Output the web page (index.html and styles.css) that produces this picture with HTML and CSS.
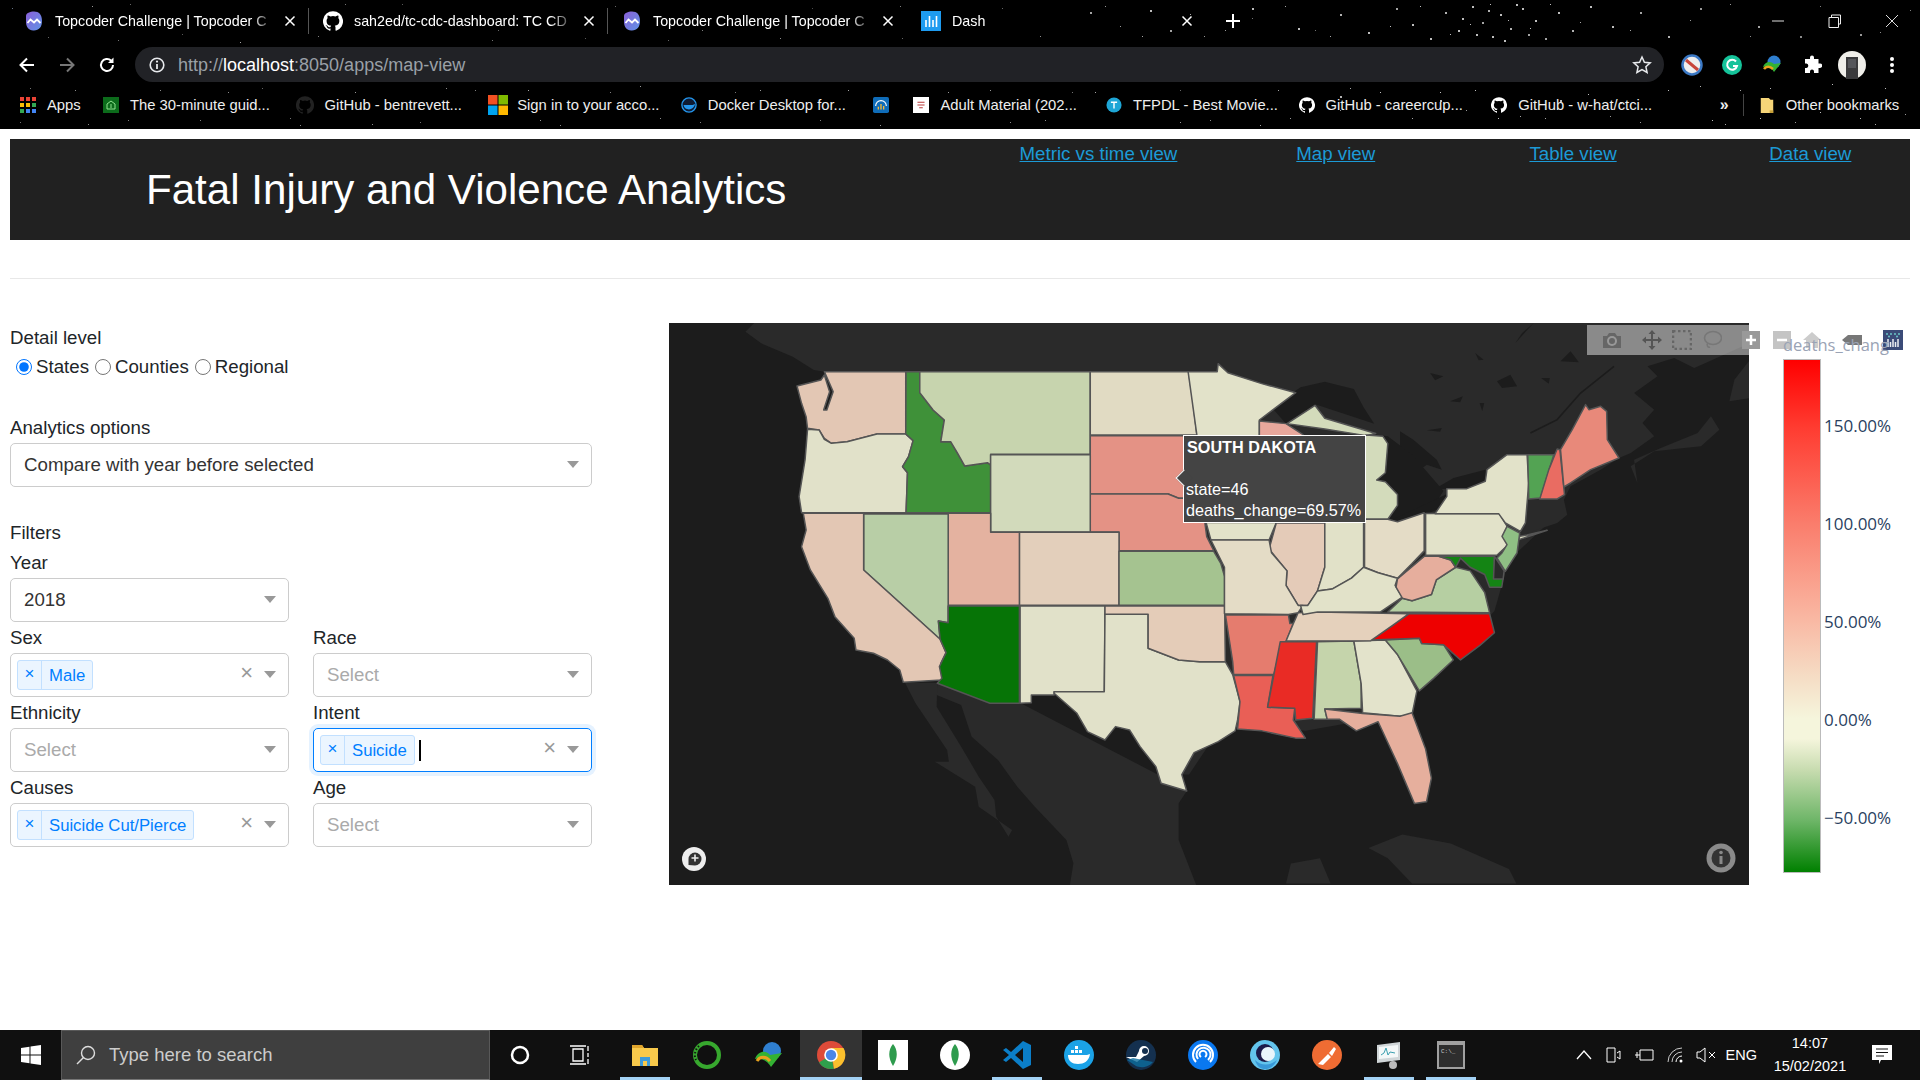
FILE: index.html
```html
<!DOCTYPE html>
<html lang="en">
<head>
<meta charset="utf-8">
<title>Dash</title>
<link rel="stylesheet" href="styles.css">
</head>
<body>
<svg class="defs" width="0" height="0" aria-hidden="true">
  <defs><linearGradient id="tcg" x1="0" y1="0" x2="1" y2="1"><stop offset="0" stop-color="#8a5fd8"/><stop offset="1" stop-color="#5f93e6"/></linearGradient></defs>
  <symbol id="gh" viewBox="0 0 24 24"><path fill="currentColor" d="M12 .3a12 12 0 0 0-3.8 23.4c.6.1.8-.3.8-.6v-2c-3.3.7-4-1.6-4-1.6-.6-1.4-1.4-1.8-1.4-1.8-1-.7.1-.7.1-.7 1.2 0 1.9 1.2 1.9 1.2 1 1.8 2.8 1.3 3.5 1 0-.8.4-1.3.7-1.6-2.7-.3-5.5-1.3-5.5-6 0-1.2.5-2.3 1.3-3.1-.2-.4-.6-1.6 0-3.2 0 0 1-.3 3.4 1.2a11.5 11.5 0 0 1 6 0c2.3-1.5 3.3-1.2 3.3-1.2.6 1.600.2 2.8 0 3.2.9.8 1.3 1.9 1.3 3.2 0 4.6-2.8 5.6-5.5 5.9.5.4.9 1 .9 2.2v3.3c0 .3.1.7.8.6A12 12 0 0 0 12 .3"/></symbol>
  <symbol id="tc" viewBox="0 0 20 20"><path fill="url(#tcg)" d="M2 5c0-3 4-4.500 8-4.500 5 0 8 3 8 9.500 0 6-3 9.500-8 9.500C5 20 2 16 2 11z"/><path d="M3.500 12l3-3.500 3.500 3 3-3 3.500 3.500" fill="none" stroke="#fff" stroke-width="1.800"/></symbol>
  <symbol id="dash" viewBox="0 0 20 20"><rect width="20" height="20" fill="#1e9bf0"/><path d="M5 16V9M8.500 16V5M12 16V9M15.500 16V5" stroke="#fff" stroke-width="1.600"/></symbol>
  <symbol id="x" viewBox="0 0 12 12"><path d="M1.500 1.500l9 9M10.500 1.500l-9 9" stroke="#fff" stroke-width="1.500" fill="none"/></symbol>
</svg>

<header class="chrome">
  <span class="stars"></span>
  <span class="stars dense"></span>
  <div class="tabstrip">
    <div class="tab sep"><svg class="fav"><use href="#tc"/></svg><span class="tab-title">Topcoder Challenge | Topcoder C</span><svg class="tab-x"><use href="#x"/></svg></div>
    <div class="tab sep"><svg class="fav gh"><use href="#gh"/></svg><span class="tab-title">sah2ed/tc-cdc-dashboard: TC CD</span><svg class="tab-x"><use href="#x"/></svg></div>
    <div class="tab"><svg class="fav"><use href="#tc"/></svg><span class="tab-title">Topcoder Challenge | Topcoder C</span><svg class="tab-x"><use href="#x"/></svg></div>
    <div class="tab"><svg class="fav"><use href="#dash"/></svg><span class="tab-title">Dash</span><svg class="tab-x"><use href="#x"/></svg></div>
    <svg class="new-tab" viewBox="0 0 16 16"><path d="M8 1v14M1 8h14" stroke="#fff" stroke-width="2"/></svg>
    <div class="win">
      <span class="win-btn"><svg viewBox="0 0 14 14" width="14" height="14"><path d="M1 7h12" stroke="#ddd"/></svg></span>
      <span class="win-btn"><svg viewBox="0 0 14 14" width="14" height="14"><path d="M3.500 3.500V1h9v9h-2.500M1 3.500h9.500v10H1z" fill="none" stroke="#eee"/></svg></span>
      <span class="win-btn"><svg viewBox="0 0 14 14" width="14" height="14"><path d="M1 1l12 12M13 1L1 13" stroke="#ddd"/></svg></span>
    </div>
  </div>
  <div class="toolbar">
    <span class="nav"><svg viewBox="0 0 18 18" width="18" height="18"><path d="M16 9H3M9 2.500 2.500 9 9 15.500" fill="none" stroke="#fff" stroke-width="2"/></svg></span>
    <span class="nav"><svg viewBox="0 0 18 18" width="18" height="18"><path d="M2 9h13M9 2.500 15.500 9 9 15.500" fill="none" stroke="#777" stroke-width="2"/></svg></span>
    <span class="nav"><svg viewBox="0 0 18 18" width="18" height="18"><path d="M15 9a6 6 0 1 1-1.800-4.300" fill="none" stroke="#fff" stroke-width="2"/><path d="M15.500 1.500v5.500H10z" fill="#fff"/></svg></span>
    <div class="omnibox">
      <svg viewBox="0 0 18 18" width="18" height="18"><circle cx="9" cy="9" r="6.800" fill="none" stroke="#e8eaed" stroke-width="1.600"/><path d="M9 8v5" stroke="#e8eaed" stroke-width="1.800"/><circle cx="9" cy="5.600" r="1.100" fill="#e8eaed"/></svg>
      <span class="url">http://<b>localhost</b>:8050/apps/map-view</span>
      <svg class="star" viewBox="0 0 20 20" width="20" height="20"><path d="M10 2l2.400 5.300 5.800.600-4.300 3.900 1.200 5.700L10 14.600 4.900 17.500l1.200-5.700L1.800 7.900l5.800-.6z" fill="none" stroke="#e8eaed" stroke-width="1.500"/></svg>
    </div>
    <span class="ext"><svg viewBox="0 0 22 22" width="22" height="22"><circle cx="11" cy="11" r="9.500" fill="#eee" stroke="#3b78c4" stroke-width="2.500"/><path d="M5 6l12 10" stroke="#c8453a" stroke-width="3"/></svg></span>
    <span class="ext"><svg viewBox="0 0 22 22" width="22" height="22"><circle cx="11" cy="11" r="10" fill="#15c39a"/><path d="M15 7.500a5 5 0 1 0 1 4.500h-4" fill="none" stroke="#fff" stroke-width="2"/></svg></span>
    <span class="ext"><svg viewBox="0 0 22 22" width="22" height="22"><circle cx="13" cy="8" r="6.500" fill="#2f7fd0"/><path d="M2 13c2-6 8-6 11-3l7-1-7 9c-2-4-6-6-11-5z" fill="#34b233"/><path d="M3 15c2-3 6-3 9 0" fill="none" stroke="#e8a31e" stroke-width="2.500"/></svg></span>
    <span class="ext"><svg viewBox="0 0 20 20" width="20" height="20"><path fill="#fff" d="M8 2.500a2 2 0 0 1 4 0V4h4.500v4.500H18a2.200 2.200 0 0 1 0 4.400h-1.500V18H12v-1.500a2 2 0 0 0-4 0V18H3v-5h1.500a2.300 2.300 0 0 0 0-4.500H3V4h5z"/></svg></span>
    <span class="ext"><svg viewBox="0 0 28 28" width="28" height="28"><circle cx="14" cy="14" r="14" fill="#efeee9"/><path d="M8 28V6h12v22z" fill="#3a3a3c"/><path d="M10 8h8v9h-8z" fill="#55565a"/></svg></span>
    <span class="ext"><svg viewBox="0 0 6 18" width="6" height="18"><circle cx="3" cy="3" r="2" fill="#fff"/><circle cx="3" cy="9" r="2" fill="#fff"/><circle cx="3" cy="15" r="2" fill="#fff"/></svg></span>
  </div>
  <div class="bookmarks">
    <div class="bm bm-apps"><svg class="bm-i" viewBox="0 0 16 16"><g fill="#ea4335"><rect x="0" y="0" width="4" height="4"/><rect x="6" y="0" width="4" height="4"/><rect x="12" y="0" width="4" height="4"/></g><g fill="#fbbc05"><rect x="0" y="6" width="4" height="4"/><rect x="6" y="6" width="4" height="4"/></g><g fill="#34a853"><rect x="12" y="6" width="4" height="4"/><rect x="0" y="12" width="4" height="4"/></g><g fill="#4285f4"><rect x="6" y="12" width="4" height="4"/><rect x="12" y="12" width="4" height="4"/></g></svg>Apps</div>
    <div class="bm"><svg class="bm-i" viewBox="0 0 16 16"><rect width="20" height="16" fill="#0c6b1b"/><path d="M4 12V7l4-3 4 3v5z" fill="none" stroke="#8fe28f"/><path d="M8 7v4" stroke="#8fe28f"/></svg>The 30-minute guid...</div>
    <div class="bm"><svg class="bm-i gh-dark"><use href="#gh"/></svg>GitHub - bentrevett...</div>
    <div class="bm"><svg class="bm-i ms" viewBox="0 0 20 20"><rect width="9.500" height="9.500" fill="#f25022"/><rect x="10.500" width="9.500" height="9.500" fill="#7fba00"/><rect y="10.500" width="9.500" height="9.500" fill="#00a4ef"/><rect x="10.500" y="10.500" width="9.500" height="9.500" fill="#ffb900"/></svg>Sign in to your acco...</div>
    <div class="bm"><svg class="bm-i" viewBox="0 0 18 18"><circle cx="9" cy="9" r="8" fill="#0f1b33" stroke="#2496ed" stroke-width="1.500"/><path d="M3 9h10c1 0 2-1 3-1-1 4-4 6-7 6-3 0-6-2-6-5z" fill="#2496ed"/></svg>Docker Desktop for...</div>
    <div class="bm bm-s"><svg class="bm-i" viewBox="0 0 18 18"><rect width="18" height="18" rx="2" fill="#0f6cb8"/><path d="M3 10a6 6 0 0 1 12 0" fill="none" stroke="#fff" stroke-width="1.300"/><path d="M6 14v-3M9 14V8M12 14v-4" stroke="#f5b93a" stroke-width="1.500"/></svg></div>
    <div class="bm"><svg class="bm-i" viewBox="0 0 18 18"><rect width="18" height="18" fill="#fff"/><path d="M5 6h8M5 9h8M7 12h4" stroke="#b93a3a" stroke-width="1.200"/></svg>Adult Material (202...</div>
    <div class="bm"><svg class="bm-i" viewBox="0 0 18 18"><circle cx="9" cy="9" r="8.500" fill="#1ea6d6"/><path d="M5.500 6h7M9 6v7" stroke="#fff" stroke-width="1.600"/></svg>TFPDL - Best Movie...</div>
    <div class="bm"><svg class="bm-i gh"><use href="#gh"/></svg>GitHub - careercup...</div>
    <div class="bm"><svg class="bm-i gh"><use href="#gh"/></svg>GitHub - w-hat/ctci...</div>
    <span class="bm-more">»</span>
    <span class="bm-sep"></span>
    <div class="bm bm-other"><svg class="bm-i" viewBox="0 0 16 18"><path d="M1 1h9l2 2v0h3v15H1z" fill="#f6d578"/><path d="M11 15h4v3h-4z" fill="#c8a13a"/></svg>Other bookmarks</div>
  </div>
</header>

<main class="page">
  <section class="hero">
    <h1 class="hero-title">Fatal Injury and Violence Analytics</h1>
    <nav class="hero-nav">
      <a class="hero-link" href="#">Metric vs time view</a>
      <a class="hero-link" href="#">Map view</a>
      <a class="hero-link" href="#">Table view</a>
      <a class="hero-link" href="#">Data view</a>
    </nav>
  </section>
  <hr class="rule">
  <div class="content">
    <aside class="controls">
      <div class="label label-first">Detail level</div>
      <div class="radios">
        <label class="radio"><input type="radio" name="lvl" checked>States</label>
        <label class="radio"><input type="radio" name="lvl">Counties</label>
        <label class="radio"><input type="radio" name="lvl">Regional</label>
      </div>
      <div class="label label-gap1">Analytics options</div>
      <div class="select"><span class="value">Compare with year before selected</span><i class="arrow"></i></div>
      <div class="label label-gap2">Filters</div>
      <div class="filters">
        <div><div class="label">Year</div><div class="select"><span class="value">2018</span><i class="arrow"></i></div></div>
        <div></div>
        <div><div class="label">Sex</div><div class="select multi"><span class="tag"><span class="tag-x">×</span><span class="tag-l">Male</span></span><span class="clear">×</span><i class="arrow"></i></div></div>
        <div><div class="label">Race</div><div class="select"><span class="ph">Select</span><i class="arrow"></i></div></div>
        <div><div class="label">Ethnicity</div><div class="select"><span class="ph">Select</span><i class="arrow"></i></div></div>
        <div><div class="label">Intent</div><div class="select multi focus"><span class="tag"><span class="tag-x">×</span><span class="tag-l">Suicide</span></span><span class="caret"></span><span class="clear">×</span><i class="arrow"></i></div></div>
        <div><div class="label">Causes</div><div class="select multi"><span class="tag"><span class="tag-x">×</span><span class="tag-l">Suicide Cut/Pierce</span></span><span class="clear">×</span><i class="arrow"></i></div></div>
        <div><div class="label">Age</div><div class="select"><span class="ph">Select</span><i class="arrow"></i></div></div>
      </div>
    </aside>

    <div class="plot">
      <svg class="map" viewBox="669 323 1080 562" width="1080" height="562">
        <rect x="669" y="323" width="1080" height="562" fill="#1c1c1c"/>
        <!-- land -->
        <g class="land" transform="translate(670 320) scale(.3508 .3333)">
          <path d="M240 9H1568V1000H700L600 800 500 580V300L440 155 410 150 350 110 260 70 215 35Z"/>
        </g>
        <g class="land" transform="translate(670 590) scale(.3508 .3333)">
          <path d="M762 280 912 340H1000L1475 600 1450 640 1450 750 1500 885H1140L1150 820 1130 750 1040 650 990 590 935 510 860 440 830 345 760 315Z"/>
          <path d="M670 278H762L760 350 830 470 880 560 925 630 930 680 965 740 975 720 880 650 870 590 755 515 795 515 790 480 700 340Z"/>
        </g>
        <g class="land" transform="translate(1160 320) scale(.4847 .3636)">
          <path d="M-5 0H800V560L720 660 690 800 620 900 530 1000 510 1080 300 1130 160 1110 100 1170 60 1250H-5Z"/>
          <path d="M260 1550 270 1495 330 1480 352 1550Z"/>
          <path d="M430 1452 500 1415 600 1440 720 1510 735 1550H520L470 1480Z"/>
        </g>
        <g class="land" transform="translate(1400 323) scale(.3344 .3333)">
          <path d="M0 0H1047V60L880 135 820 105 740 130 770 160 700 210 760 260 725 300 760 340 690 390 655 405 600 440 510 490 490 530 500 575 470 600 380 630 360 630 330 720H0Z"/>
          <path d="M690 430 760 385 900 370 955 320 930 280 890 330 780 375 700 410 710 480Z"/>
          <path d="M985 235 1047 225V110L1000 170Z"/>
        </g>
        <!-- lakes -->
        <g class="lake" transform="translate(1400 323) scale(.3344 .3333)">
          <path d="M90 150 130 160 105 172ZM290 175 330 155 350 190 305 195ZM422 165 448 165 445 182ZM480 115 510 85 535 118ZM345 60 400 0 365 30ZM238 240 252 240 246 265ZM80 322 125 315 120 326ZM225 90 250 110 235 112ZM150 235 188 220 180 238Z"/>
          <path class="river" d="M390 330 470 290 540 210 640 130"/>
          <path d="M100 500 160 465 255 440 260 475 200 497 140 497Z"/>
          <path d="M0 600 30 550 140 518 110 560 75 575Z"/>
          <path d="M0 325 40 350 110 410 125 440 80 425 20 470 0 470Z"/>
        </g>
        <g class="lake" transform="translate(1160 320) scale(.4847 .3636)">
          <path d="M230 240 290 185 340 170 400 190 420 240 442 285 320 232 260 285Z"/>
          <path d="M425 312 470 320 520 370 585 470 575 490 470 560 490 490 445 440 462 340Z"/>
          <path d="M470 555 590 480 600 505 490 552Z"/>
        </g>
        <!-- western states -->
        <g class="states" transform="translate(670 320) scale(.3508 .3333)">
          <path fill="#e3c7b4" d="M362 198 430 180 440 165 455 215 438 270 447 270 465 215 440 155H672V342H590L505 365 460 370 440 355 425 330 392 325 388 290 375 250Z"/>
          <path fill="#e1e1c9" d="M392 328 425 330 440 358 460 370 505 365 590 342H672L693 362 680 410 663 440 677 458 673 578H375L368 530 385 420Z"/>
          <path fill="#3f9139" d="M673 155H712V218L750 270 782 300 772 365 800 365 820 400 840 438 905 428 914 435V578H673L677 458 663 440 680 410 693 362 672 342Z"/>
          <path fill="#c7d4ae" d="M712 155H1198V403H914V435L905 428 840 438 820 400 800 365H772L782 300 750 270 712 218Z"/>
          <path fill="#e1dbc3" d="M1198 155H1478L1490 240 1502 345H1198Z"/>
          <path fill="#e49285" d="M1198 347H1505L1530 400 1530 480 1525 535 1450 535 1420 522H1198Z"/>
          <path fill="#e49285" d="M1198 522H1420L1450 535 1525 535 1525 610 1530 650 1550 692H1280V636H1198Z"/>
          <path fill="#d2dabb" d="M914 404H1198V636H914Z"/>
          <path fill="#e3cfbb" d="M996 637H1280V856H996Z"/>
          <path fill="#e4b2a0" d="M793 580H914V637H996V856H793Z"/>
          <path fill="#b8cea6" d="M552 582H793V908L765 903 770 958 552 750Z"/>
          <path fill="#e3c7b4" d="M380 580H552V750L770 958 787 998 772 1030 775 1080 665 1087 655 1050 620 1020 580 1000 530 990 525 955 470 890 450 835 400 750 375 680 388 630Z"/>
          <path fill="#067406" d="M793 858H996V1150H912L762 1090 775 1075 768 1040 787 998 770 958 765 903 793 908Z"/>
          <path fill="#e1e1c9" d="M998 858H1240L1238 1115H1095V1125H1030V1148L998 1150Z"/>
          <path fill="#e1e1c9" d="M1240 883H1363V985L1400 1000 1450 1020 1510 1025 1583 1025 1604 1064 1625 1145 1618 1200 1611 1233 1563 1265 1494 1298 1459 1364 1473 1413 1400 1390 1385 1340 1340 1280 1310 1230 1270 1220 1240 1260 1190 1235 1160 1180 1095 1120V1115H1238Z"/>
          <path fill="#e4ccb8" d="M1240 858H1581L1583 1025H1510L1450 1020 1400 1000 1363 985V883H1240Z"/>
          <path fill="#a5c390" d="M1280 694H1550L1570 730 1581 770V856H1280Z"/>
        </g>
        <!-- eastern states -->
        <g class="states" transform="translate(1160 320) scale(.4847 .3636)">
          <path fill="#e2e2c9" d="M58 142H118L120 120 140 145 210 175 280 200 205 275V320L215 480 240 557H95L76 316Z"/>
          <path fill="#e8a89c" d="M205 278 260 285 295 315V540H240L215 480 205 320Z"/>
          <path fill="#d3dbbb" d="M262 285 320 235 340 270 445 312 425 318 340 300Z"/>
          <path fill="#d3dbbb" d="M340 420 425 316 460 320 470 340 465 420 447 440 465 445 490 480 490 510 470 548H340Z"/>
          <path fill="#e2e2c9" d="M95 557H240L225 605H105Z"/>
          <path fill="#e4cbb8" d="M240 558H340V680L325 745 305 785H285L260 730 262 690 225 630Z"/>
          <path fill="#e1e1c8" d="M340 553H420V680L395 710 355 740 325 745 340 680Z"/>
          <path fill="#e4dcc6" d="M422 548H470L490 555 545 530V635L520 670 490 710 450 695 422 680Z"/>
          <path fill="#e4dcc6" d="M105 605H225L230 640 262 690 260 730 285 785H295L285 805 265 810 133 808V680Z"/>
          <path fill="#e57c6e" d="M135 811H265L268 835H275L260 885 248 905 235 975H152L150 940Z"/>
          <path fill="#e95f56" d="M152 978H233L222 1065 278 1068 275 1100 300 1150 280 1150 210 1130 160 1125 165 1050Z"/>
          <path fill="#e92b25" d="M248 885H323L315 1095 280 1100 278 1068 222 1065 235 975Z"/>
          <path fill="#c5d4ab" d="M325 885 400 883 415 1000V1068L340 1070 345 1098H318Z"/>
          <path fill="#e3e3cb" d="M400 883 465 880 490 920 530 1020 520 1085 495 1090 418 1080 415 1000Z"/>
          <path fill="#e6af9d" d="M340 1070 418 1082 495 1090 520 1080 548 1180 560 1260 550 1325 525 1330 490 1220 450 1105 405 1130 370 1098H345Z"/>
          <path fill="#9bbe88" d="M465 880 535 875 540 890 585 893 605 935 565 985 535 1020 490 920Z"/>
          <path fill="#ee0000" d="M513 808H680L690 860 660 895 620 935 585 893 540 890 535 875 435 880 480 840Z"/>
          <path fill="#e5d1bc" d="M325 803 513 808 480 840 435 882 260 883 275 835 285 805Z"/>
          <path fill="#e2e2c9" d="M325 745 355 740 395 710 420 680 450 695 490 710 485 730 500 762 455 803H325L295 810 290 785H305Z"/>
          <path fill="#b6cfa2" d="M470 803 500 765 520 772 560 755 570 715 610 680 640 690 670 750 680 805Z"/>
          <path fill="#e6ae9d" d="M490 712 545 650 575 650 600 660 610 680 570 715 560 755 520 772 500 765 487 735Z"/>
          <path fill="#e2e2c9" d="M548 532H700L715 565 725 610 695 647H548Z"/>
          <path fill="#148414" d="M575 650H690V710H708L705 735H680L670 700 640 680 620 655 610 680 600 660Z"/>
          <path fill="#2a2a2a" d="M690 650 710 690 708 712H688Z"/>
        </g>
        <g class="states" transform="translate(1400 323) scale(.3344 .3333)">
          <path fill="#e2e2c9" d="M105 572 140 520 140 497 200 497 255 475 260 440 320 395H380L385 480 375 600 360 625 315 600 295 572Z"/>
          <path fill="#e2e2c9" d="M355 650 440 622 380 636 358 640Z"/>
          <path fill="#8fbf84" d="M320 610 358 630 350 690 315 745 290 705 305 690 320 665 305 640Z"/>
          <path fill="#53a353" d="M382 395H460L420 525 385 528Z"/>
          <path fill="#e96c62" d="M470 378 478 380 492 515 470 528H418L445 440Z"/>
          <path fill="#e8897a" d="M480 380 515 320 555 245 565 260 600 250 618 265 620 350 655 405 570 440 510 480 490 492Z"/>
        </g>
        <g class="logo-mapbox">
          <circle cx="694" cy="859" r="12" fill="#eee"/>
          <path d="M688.500 865v-6a6.500 6.500 0 1 1 6.500 6.500z" fill="#333"/>
          <path d="M695 854.500v7M691.500 858h7" stroke="#eee" stroke-width="1.600"/>
        </g>
        <g class="info">
          <circle cx="1721" cy="858" r="14.500" fill="#8a8a8a"/>
          <circle cx="1721" cy="858" r="9.500" fill="#333"/>
          <rect x="1719.500" y="856" width="3" height="8" fill="#8a8a8a"/>
          <circle cx="1721" cy="852.500" r="1.800" fill="#8a8a8a"/>
        </g>
      </svg>

      <div class="colorbar">
        <div class="cb-title">deaths_chang</div>
        <div class="cb-body">
          <div class="cb-ramp"></div>
          <div class="cb-ticks">
            <span class="tick t1">150.00%</span>
            <span class="tick t2">100.00%</span>
            <span class="tick t3">50.00%</span>
            <span class="tick t4">0.00%</span>
            <span class="tick t5">−50.00%</span>
          </div>
        </div>
      </div>

      <div class="hover">
        <b class="hover-h">SOUTH DAKOTA</b>
        <span class="hover-l">&nbsp;</span>
        <span class="hover-l">state=46</span>
        <span class="hover-l">deaths_change=69.57%</span>
      </div>

      <div class="modebar">
        <svg class="mb" viewBox="0 0 20 20"><path fill="#666" d="M1 6h4l2-3h6l2 3h4v12H1z"/><circle cx="10" cy="11" r="5" fill="#999"/><circle cx="10" cy="11" r="3" fill="#666"/></svg>
        <svg class="mb" viewBox="0 0 20 20"><path fill="#555" d="M10 0l3.500 4H11v5h5V6.500l4 3.500-4 3.500V11h-5v5h2.500L10 20l-3.500-4H9v-5H4v2.500L0 10l4-3.500V9h5V4H6.500z"/></svg>
        <svg class="mb" viewBox="0 0 20 20"><path fill="none" stroke="#666" stroke-width="2.500" stroke-dasharray="2.500 2.500" d="M1 1h18v18H1z"/></svg>
        <svg class="mb" viewBox="0 0 20 20"><ellipse cx="11" cy="8" rx="8.500" ry="6.500" fill="none" stroke="#777" stroke-width="1.600"/><path d="M6 13c-2 2 0 5 2 4" fill="none" stroke="#777" stroke-width="1.600"/></svg>
        <svg class="mb mb-plus" viewBox="0 0 18 18"><rect width="18" height="18" fill="#999"/><path d="M9 4v10M4 9h10" stroke="#fff" stroke-width="2.500"/></svg>
        <svg class="mb mb-plus" viewBox="0 0 18 18"><rect width="18" height="18" fill="#c4c4c4"/><path d="M4 9h10" stroke="#fff" stroke-width="2.500"/></svg>
        <svg class="mb" viewBox="0 0 20 20"><path fill="#ccc" d="M10 2l9 8h-3v8h-4v-5H8v5H4v-8H1z"/></svg>
        <svg class="mb" viewBox="0 0 20 20"><path fill="#777" d="M0 10l6-5h14v10H6z"/></svg>
        <svg class="mb-logo" viewBox="0 0 20 20"><rect width="20" height="20" fill="#3b4b78"/><g stroke="#fff" stroke-width="1.500"><path d="M5 9v8M10 9v8M15 9v8M7.500 12v5M12.500 12v5" opacity=".9"/></g><g fill="#6fd3d0"><circle cx="4" cy="4" r=".9"/><circle cx="8" cy="4" r=".9"/><circle cx="12" cy="4" r=".9"/><circle cx="16" cy="4" r=".9"/><circle cx="6" cy="6.500" r=".9"/><circle cx="14" cy="6.500" r=".9"/></g></svg>
      </div>
    </div>
  </div>
</main>

<footer class="taskbar">
  <span class="start"><svg viewBox="0 0 20 20" width="20" height="20"><path fill="#fff" d="M0 3l8.500-1.200V9.500H0zM9.500 1.600 20 0v9.500H9.500zM0 10.500h8.500v7.700L0 17zM9.500 10.500H20V20L9.500 18.400z"/></svg></span>
  <div class="search"><svg viewBox="0 0 20 20" width="20" height="20"><circle cx="12" cy="8" r="6.500" fill="none" stroke="#ddd" stroke-width="1.400"/><path d="M7.500 12.500 1 19" stroke="#ddd" stroke-width="1.400"/></svg><span>Type here to search</span></div>
  <span class="sys"><svg viewBox="0 0 20 20" width="20" height="20"><circle cx="10" cy="10" r="8" fill="none" stroke="#fff" stroke-width="2.500"/></svg></span>
  <span class="sys"><svg viewBox="0 0 20 20" width="20" height="20"><path d="M3 4h10v12H3zM0 1h16M0 19h16M18 1v5M18 8v4M18 14v5" fill="none" stroke="#fff" stroke-width="1.300"/></svg></span>
  <div class="apps">
    <span class="app on"><svg viewBox="0 0 28 28" width="28" height="28"><path d="M1 4h10l2 3h14v18H1z" fill="#f8c94b"/><path d="M1 4h10l2 3H1z" fill="#e0a52c"/><path d="M9 25v-9h10v9h-3v-5h-4v5z" fill="#3e9bd9"/></svg></span>
    <span class="app"><svg viewBox="0 0 30 30" width="30" height="30"><circle cx="15" cy="15" r="12" fill="none" stroke="#37a82e" stroke-width="4"/><path d="M7 6a12 12 0 0 0-3 14" fill="none" stroke="#121212" stroke-width="2" stroke-dasharray="1.500 2"/></svg></span>
    <span class="app"><svg viewBox="0 0 30 30" width="30" height="30"><circle cx="18" cy="11" r="9" fill="#2f7fd0"/><path d="M1 19c3-9 12-9 15-4l12-2-11 14c-3-6-9-9-16-8z" fill="#34b233"/><path d="M3 21c3-5 9-5 13 0" fill="none" stroke="#e8a31e" stroke-width="3"/></svg></span>
    <span class="app on active"><svg viewBox="0 0 30 30" width="30" height="30"><circle cx="15" cy="15" r="14" fill="#dd4b39"/><path d="M15 15 3 22.500A14 14 0 0 0 18 28.700z" fill="#2fa04c"/><path d="M15 8h12.500A14 14 0 0 1 18 28.700z" fill="#fbc02d"/><circle cx="15" cy="15" r="6.800" fill="#fff"/><circle cx="15" cy="15" r="5.200" fill="#4a86e8"/></svg></span>
    <span class="app"><svg viewBox="0 0 30 30" width="30" height="30"><rect width="30" height="30" fill="#fff"/><path d="M15 4c5 6 5 14 0 22-5-8-5-16 0-22z" fill="#2e9b4d"/></svg></span>
    <span class="app"><svg viewBox="0 0 30 30" width="30" height="30"><circle cx="15" cy="15" r="15" fill="#fff"/><path d="M15 4c5 6 5 14 0 22-5-8-5-16 0-22z" fill="#2e9b4d"/></svg></span>
    <span class="app on"><svg viewBox="0 0 30 30" width="30" height="30"><path d="M21 1l8 4v20l-8 4L9 18l-5 4-3-2 6-5-6-5 3-2 5 4z" fill="#0b7ec8"/><path d="M21 8v14l-8-7z" fill="#121212"/></svg></span>
    <span class="app"><svg viewBox="0 0 30 30" width="30" height="30"><circle cx="15" cy="15" r="15" fill="#1ba2e6"/><path d="M4 15h19c1 0 2-1 3-1-1 7-6 10-12 10-6 0-10-3-10-9z" fill="#fff"/><path d="M7 13h3v-3H7zM11 13h3v-3h-3zM15 13h3v-3h-3zM11 9h3V6h-3z" fill="#fff"/></svg></span>
    <span class="app"><svg viewBox="0 0 30 30" width="30" height="30"><circle cx="15" cy="15" r="15" fill="#14304f"/><path d="M0 17l11 5 7-6a5 5 0 1 0-5-5l-3 6z" fill="#fff"/><circle cx="19" cy="11" r="3" fill="#14304f"/><path d="M1 20l9 6c4 2 12 2 17-4l-20-4z" fill="#0d6e9e" opacity=".8"/></svg></span>
    <span class="app"><svg viewBox="0 0 30 30" width="30" height="30"><circle cx="15" cy="15" r="15" fill="#0a78f0"/><path d="M8 22a10 10 0 1 1 14 0M10 19a7 7 0 1 1 10 1M13 17a3.500 3.500 0 1 1 4 0" fill="none" stroke="#fff" stroke-width="2"/></svg></span>
    <span class="app"><svg viewBox="0 0 30 30" width="30" height="30"><circle cx="15" cy="15" r="15" fill="#63c4ec"/><circle cx="15" cy="13" r="9" fill="#1c1b4a"/><circle cx="18" cy="14" r="7" fill="#e8f5fb"/><path d="M5 20c6 6 15 6 22 0-3 7-8 9-12 9-4 0-8-2-10-9z" fill="#3898d8"/></svg></span>
    <span class="app"><svg viewBox="0 0 30 30" width="30" height="30"><circle cx="15" cy="15" r="15" fill="#ef6c33"/><path d="M6 24l10-10 3 3-8 8zM17 13l5-6 2 2-4 7z" fill="#fff"/></svg></span>
    <span class="app on"><svg viewBox="0 0 30 30" width="30" height="30"><path d="M3 5 26 2v18L3 23z" fill="#d0d6d8"/><path d="M5 7l19-2v12L5 19z" fill="#f4f8f8"/><path d="M7 15l3-2 2-5 2 7 2-3 5 1" fill="none" stroke="#3a9fb0"/><circle cx="19" cy="25" r="4" fill="#bbb"/></svg></span>
    <span class="app on"><svg viewBox="0 0 30 30" width="30" height="30"><rect x="1" y="1" width="28" height="28" fill="#a0a0a0"/><rect x="3" y="5" width="24" height="22" fill="#2e2e2e"/><text class="cmd" x="5" y="13">C:\_</text></svg></span>
  </div>
  <div class="tray">
    <svg viewBox="0 0 16 16" width="16" height="16"><path d="M1 12l7-8 7 8" fill="none" stroke="#fff" stroke-width="1.300"/></svg>
    <svg viewBox="0 0 18 18" width="18" height="18"><path d="M3 2h8v14H3zM13 7l3-2v8l-3-2" fill="none" stroke="#fff"/></svg>
    <svg viewBox="0 0 20 18" width="20" height="18"><path d="M6 4h13v10H6zM1 9h5M3 6v6" fill="none" stroke="#fff"/></svg>
    <svg viewBox="0 0 18 18" width="18" height="18"><path d="M2 16a14 14 0 0 1 14-14M6 16a10 10 0 0 1 10-10" fill="none" stroke="#ccc"/><path d="M10 16a6 6 0 0 1 6-6" fill="none" stroke="#fff"/><circle cx="15" cy="15" r="1.500" fill="#fff"/></svg>
    <svg viewBox="0 0 20 16" width="20" height="16"><path d="M1 5h3l5-4v14l-5-4H1zM13 5l6 6M19 5l-6 6" fill="none" stroke="#fff"/></svg>
    <span class="lang">ENG</span>
    <span class="clock"><span>14:07</span><span>15/02/2021</span></span>
    <svg class="notif" viewBox="0 0 20 20" width="20" height="20"><path d="M0 0h20v15H9l-2 4v-4H0z" fill="#fff"/><path d="M4 4h12M4 7.500h12M4 11h8" stroke="#121212" stroke-width="1.200"/></svg>
  </div>
</footer>
</body>
</html>
```

FILE: styles.css
```css
* { box-sizing: border-box; }
html, body { margin: 0; height: 100%; }
body {
  width: 1920px; height: 1080px; overflow: hidden;
  display: flex; flex-direction: column;
  background: #fff; color: #212529;
  font-family: "Liberation Sans", Arial, sans-serif;
}
.defs { position: absolute; }

/* browser chrome */
.chrome { position: relative; height: 129px; background: #000; color: #fff; flex: none; overflow: hidden; }
.stars {
  position: absolute; left: 0; top: 0; width: 1px; height: 1px; border-radius: 50%;
  background: transparent;
  box-shadow:
    12px 8px #8a9ab0, 48px 37px #fff8, 92px 6px #ccc, 118px 40px #fff9, 160px 90px #bbb, 182px 34px #fff7,
    240px 42px #ddd, 262px 88px #fff8, 318px 36px #aaa, 355px 92px #ccc, 402px 4px #fff7, 446px 88px #bbb,
    492px 40px #fff9, 528px 90px #ddd, 585px 38px #fff7, 640px 86px #ccc, 668px 40px #fff8, 702px 30px #aaa,
    735px 92px #fff9, 780px 38px #bbb, 812px 8px #fff6, 848px 90px #ddd, 902px 38px #fff8, 948px 92px #ccc,
    1002px 8px #fff8, 1040px 36px #bbb, 1072px 92px #fff9, 1105px 6px #ccc, 1142px 36px #ddd, 1180px 90px #fff8,
    1204px 36px #ccc, 1252px 18px #fff9, 1278px 90px #ddd, 1315px 30px #fff9, 1340px 110px #ccc, 1380px 92px #fff,
    1412px 118px #ddd, 1440px 92px #fff, 1466px 110px #ccc, 1498px 118px #fff, 1545px 118px #ddd, 1588px 94px #fff,
    1610px 116px #ccc, 1668px 90px #fff, 1700px 86px #eee, 1712px 120px #fff, 1740px 90px #ddd, 1760px 118px #fff,
    1795px 122px #ccc, 1832px 84px #fff, 1860px 118px #eee, 1885px 88px #fff, 1905px 114px #ccc,
    20px 122px #999, 88px 124px #bbb, 200px 120px #aaa, 300px 125px #bbb, 420px 122px #999, 560px 125px #bbb,
    700px 122px #aaa, 880px 125px #ccc, 1010px 122px #bbb, 1180px 122px #ccc, 1260px 125px #ddd,
    30px 88px #999, 75px 90px #bbb, 128px 120px #aaa, 228px 92px #bbb, 290px 118px #999, 372px 124px #bbb, 475px 90px #aaa,
    540px 120px #ccc, 610px 92px #aaa, 660px 118px #bbb, 760px 90px #ccc, 820px 120px #aaa, 990px 90px #ccc, 1045px 120px #bbb,
    1095px 92px #ddd, 1210px 120px #bbb, 1290px 118px #ccc, 1350px 88px #ddd, 1475px 90px #fff, 1520px 116px #ddd, 1640px 122px #ccc,
    1725px 124px #ddd, 1770px 88px #eee, 1820px 112px #fff, 1875px 124px #ddd,
    130px 4px #888, 345px 4px #999, 498px 30px #888, 615px 6px #888, 900px 6px #aaa, 1120px 26px #ccc, 1190px 14px #ddd,
    1225px 30px #ccc, 1285px 6px #ddd, 1330px 36px #ddd, 1390px 26px #fff, 1420px 6px #fff, 1450px 34px #fff, 1470px 24px #fff,
    1490px 4px #fff, 1508px 20px #eee, 1530px 28px #fff, 1550px 4px #fff, 1580px 22px #ddd, 1630px 30px #ddd, 1690px 20px #ccc,
    1730px 4px #ccc, 1750px 36px #bbb, 1820px 6px #aaa, 1880px 32px #bbb, 1910px 10px #aaa;
}
.stars.dense {
  width: 2px; height: 2px;
  box-shadow:
    1090px 12px #ddd, 1150px 10px #fff, 1170px 30px #ddd, 1252px 8px #fff, 1298px 28px #fff, 1340px 14px #eee,
    1368px 32px #fff, 1396px 8px #ddd, 1412px 24px #fff, 1430px 38px #fff, 1445px 12px #eee, 1458px 30px #fff,
    1472px 6px #fff, 1482px 22px #ddd, 1492px 36px #fff, 1500px 14px #fff, 1510px 28px #eee, 1522px 8px #fff,
    1535px 20px #fff, 1545px 38px #ddd, 1558px 12px #fff, 1572px 30px #eee, 1590px 6px #fff, 1612px 26px #fff,
    1640px 12px #ddd, 1668px 36px #eee, 1700px 8px #ccc, 1758px 26px #ddd, 1800px 36px #bbb, 1860px 34px #ccc,
    1462px 18px #fff, 1476px 34px #fff, 1488px 10px #eee, 1504px 40px #fff, 1516px 4px #fff, 1528px 34px #ddd,
    1440px 100px #fff, 1560px 100px #fff, 1620px 102px #ddd, 1340px 96px #eee;
}
.tabstrip, .toolbar, .bookmarks { position: relative; z-index: 1; display: flex; align-items: center; }
.tabstrip { height: 42px; padding-left: 10px; }
.tab { width: 299px; height: 26px; display: flex; align-items: center; padding-left: 14px; }
.tab.sep { border-right: 1px solid #555; }
.fav { width: 20px; height: 20px; flex: none; }
.gh { color: #fff; }
.tab-title {
  width: 218px; margin-left: 11px; font-size: 14.3px; white-space: nowrap;
  -webkit-mask-image: linear-gradient(90deg, #000 90%, rgba(0,0,0,.15));
  mask-image: linear-gradient(90deg, #000 90%, rgba(0,0,0,.15));
}
.tab-x { width: 12px; height: 12px; margin-left: 11px; flex: none; }
.new-tab { width: 16px; height: 16px; margin-left: 19px; flex: none; }
.win { margin-left: auto; display: flex; }
.win-btn { width: 57px; display: flex; justify-content: center; }
.toolbar { height: 45px; padding-left: 7px; }
.nav { width: 40px; display: flex; justify-content: center; flex: none; }
.omnibox {
  margin: 0 8px; width: 1529px; height: 35px; border-radius: 18px; background: #212226;
  display: flex; align-items: center; gap: 12px; padding: 0 12px 0 13px; font-size: 18px; flex: none;
}
.url { color: #9aa0a6; white-space: nowrap; padding-top: 2px; }
.url b { color: #fff; font-weight: 400; }
.star { margin-left: auto; }
.ext { width: 40px; display: flex; justify-content: center; align-items: center; flex: none; }
.bookmarks { height: 36px; padding-left: 20px; font-size: 14.8px; color: #eee; white-space: nowrap; }
.bm { width: 192.6px; display: flex; align-items: center; gap: 11px; flex: none; }
.bm-apps { width: 83px; }
.bm-s { width: 40px; }
.bm-i { width: 16px; height: 16px; flex: none; }
.ms { width: 20px; height: 20px; margin-right: -2px; }
.gh-dark { color: #222; width: 18px; height: 18px; }
.bm-more { margin-left: 36px; width: 23px; font-size: 16px; font-weight: 700; }
.bm-sep { width: 1px; height: 22px; background: #444; margin-right: 15px; }
.bm-other { width: auto; }

/* page */
.page { flex: 1; padding: 10px 10px 0; min-height: 0; }
.hero { height: 101px; background: #212121; display: flex; position: relative; }
.hero-title { margin: 0; padding: 27px 0 0 136px; font-size: 42.1px; line-height: 48px; font-weight: 400; color: #fff; white-space: nowrap; }
.hero-nav { margin-left: auto; margin-right: -19px; display: flex; }
.hero-link { width: 237.3px; text-align: center; padding-top: 4px; line-height: 22px; font-size: 18.7px; color: #1c9ad6; }
.rule { margin: 38px 0 0; border: 0; border-top: 1px solid #e8e8e8; height: 0; }
.content { margin-top: 44px; display: flex; gap: 77px; }
.controls { width: 582px; flex: none; font-size: 18.7px; }
.label { height: 31px; line-height: 31px; white-space: nowrap; }
.label-first { height: 29px; line-height: 29px; }
.label-gap1 { margin-top: 30px; }
.label-gap2 { margin-top: 30px; margin-bottom: -1px; }
.radios { display: flex; height: 30px; align-items: center; padding-left: 6px; }
.radio { display: flex; align-items: center; gap: 4px; margin-right: 6px; }
.radio input { width: 16px; height: 16px; margin: 0; accent-color: #0075ff; }
.select {
  position: relative; height: 44px; border: 1px solid #ccc; border-radius: 5px; background: #fff;
  display: flex; align-items: center; padding-left: 13px; color: #333; white-space: nowrap;
}
.select.multi { padding-left: 6px; }
.select.focus { border-color: #007eff; box-shadow: 0 0 0 4px rgba(0,126,255,.1); }
.ph { color: #aaa; }
.filters { display: grid; grid-template-columns: 279px 279px; column-gap: 24px; }
.arrow {
  position: absolute; right: 12px; top: 17px; width: 0; height: 0;
  border-style: solid; border-width: 7px 6.500px 0; border-color: #999 transparent transparent;
}
.clear { position: absolute; right: 35px; top: 7px; font-size: 22px; line-height: 24px; color: #999; }
.tag {
  display: flex; height: 30px; border: 1px solid #c2e0ff; border-radius: 3px; background: #ebf5ff;
  color: #007eff; font-size: 16.7px; align-items: stretch;
}
.tag-x { width: 24px; border-right: 1px solid #c2e0ff; text-align: center; line-height: 25px; font-size: 17px; }
.tag-l { padding: 0 7px; line-height: 30px; }
.caret { width: 2px; height: 21px; background: #000; margin-left: 4px; }

/* plot */
.plot { position: relative; flex: 1; display: flex; height: 562px; }
.map { display: block; flex: none; }
.land path { fill: #2a2a2a; }
.lake path { fill: #1c1c1c; }
.lake .river { fill: none; stroke: #1c1c1c; stroke-width: 5; }
.states path { stroke: #555; stroke-width: 1.500px; vector-effect: non-scaling-stroke; stroke-linejoin: round; }
.colorbar { margin-left: 34px; width: 127px; font-family: "Open Sans", "Liberation Sans", sans-serif; color: #2a3f5f; }
.cb-title { position: relative; z-index: 2; height: 36px; padding-top: 11px; font-size: 16.5px; line-height: 22px; color: #9aa3b5; white-space: nowrap; }
.cb-body { display: flex; }
.cb-ramp {
  width: 38px; height: 514px; border: 1px solid #bbb;
  background: linear-gradient(#f00 0, #ff3b30 13%, #fa7d6c 32%, #f9b9a4 51%, #f5ddc5 62%, #f5f5dc 70%, #f5f5dc 74%, #c8dcb0 80%, #6db567 90%, #008000 100%);
}
.cb-ticks { position: relative; flex: 1; font-size: 17px; }
.tick { position: absolute; left: 3px; line-height: 22px; white-space: nowrap; }
.t1 { top: 56px; } .t2 { top: 154px; } .t3 { top: 252px; } .t4 { top: 350px; } .t5 { top: 448px; }
.hover {
  position: absolute; left: 514px; top: 112px; width: 183px; height: 88px;
  background: #444; border: 1px solid #fff; color: #fff; font-size: 16.2px; line-height: 21px; padding: 1px 0 0 2px;
}
.hover::before {
  content: ""; position: absolute; left: -6px; top: 36px; width: 11px; height: 11px;
  background: #444; border-left: 1px solid #fff; border-bottom: 1px solid #fff; transform: rotate(45deg);
}
.hover-h, .hover-l { position: relative; display: block; white-space: nowrap; }
.hover-h { padding-left: 1px; }
.modebar {
  position: absolute; top: 2px; right: 0; width: 323px; height: 30px; background: rgba(255,255,255,.45);
  display: flex; align-items: center; padding-left: 15px;
}
.mb { width: 20px; height: 20px; flex: none; margin-right: 20px; }
.mb:nth-child(2) { margin-right: 10px; }
.mb:nth-child(3) { margin-right: 10px; }
.mb-plus { width: 18px; height: 18px; margin-right: 13px; }
.mb:nth-child(6) { margin-right: 11px; }
.mb-logo { width: 20px; height: 20px; margin-left: 1px; }
.mb:nth-child(7) { margin-right: 20px; }

/* taskbar */
.taskbar { height: 50px; flex: none; background: #101010; display: flex; align-items: stretch; color: #fff; }
.start { width: 61px; display: flex; align-items: center; justify-content: center; }
.search {
  width: 429px; background: #3f3f3f; border: 1px solid #595959; border-bottom-color: #777;
  display: flex; align-items: center; padding-left: 14px; gap: 13px; font-size: 18.5px; color: #ccc;
}
.sys { width: 60px; display: flex; align-items: center; justify-content: center; flex: none; }
.sys:nth-of-type(2) { width: 60px; }
.apps { display: flex; margin-left: 4px; }
.app { width: 62px; display: flex; align-items: center; justify-content: center; position: relative; }
.app.active { background: #333; }
.app.on::after { content: ""; position: absolute; left: 6px; right: 6px; bottom: 0; height: 3px; background: #a3d2f5; }
.app.active::after { left: 0; right: 0; }
.cmd { font-family: "Liberation Mono", monospace; font-size: 6px; fill: #ccc; }
.tray { flex: 1; display: flex; align-items: center; padding-left: 94px; gap: 12px; }
.lang { font-size: 14.5px; margin-left: -2.500px; }
.clock { display: flex; flex-direction: column; align-items: center; font-size: 14.5px; line-height: 23px; width: 76px; margin-left: 3px; }
.notif { margin-left: 12px; }
```
